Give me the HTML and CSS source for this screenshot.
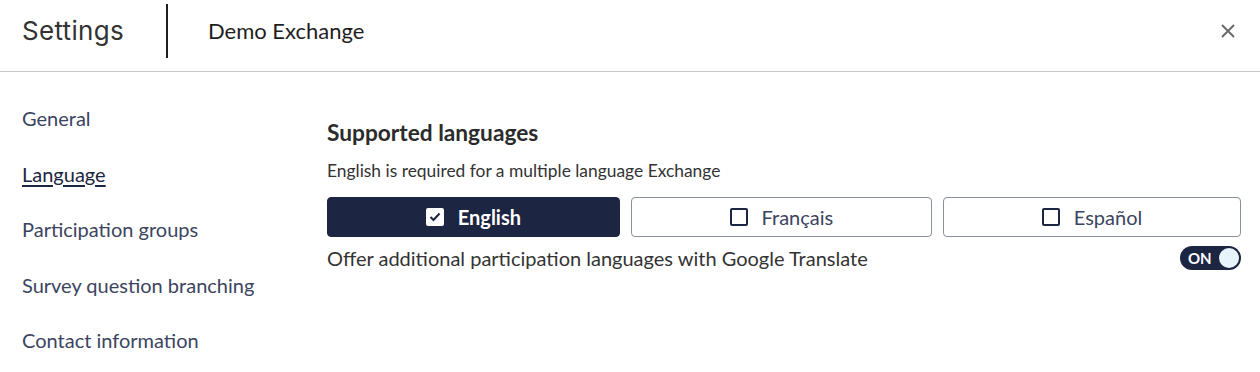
FILE: index.html
```html
<!DOCTYPE html>
<html lang="en">
<head>
<meta charset="utf-8">
<title>Settings</title>
<link rel="stylesheet" href="styles.css">
</head>
<body>
<header class="header">
  <h1 class="title">Settings</h1>
  <div class="divider"></div>
  <div class="exchange">Demo Exchange</div>
  <button class="close" aria-label="Close">
    <svg width="14" height="14" viewBox="0 0 14 14"><path d="M1 1L13 13M13 1L1 13" stroke="#6b6b6b" stroke-width="2" fill="none"/></svg>
  </button>
</header>
<div class="body">
  <nav class="sidebar">
    <a class="nav-item">General</a>
    <a class="nav-item active">Language</a>
    <a class="nav-item">Participation groups</a>
    <a class="nav-item">Survey question branching</a>
    <a class="nav-item">Contact information</a>
  </nav>
  <main class="content">
    <h2 class="section-title">Supported languages</h2>
    <p class="hint">English is required for a multiple language Exchange</p>
    <div class="langs">
      <button class="lang selected">
        <span class="box checked"><svg width="12" height="10" viewBox="0 0 12 10"><path d="M1.5 5L4.5 8L10.5 1.5" stroke="#1c2541" stroke-width="2" fill="none"/></svg></span>
        English
      </button>
      <button class="lang"><span class="box"></span>Français</button>
      <button class="lang"><span class="box"></span>Español</button>
    </div>
    <div class="translate-row">
      <span class="translate-label">Offer additional participation languages with Google Translate</span>
      <span class="toggle"><span class="toggle-text">ON</span><span class="knob"></span></span>
    </div>
  </main>
</div>
</body>
</html>
```
FILE: styles.css
```css
* { box-sizing: border-box; }
body {
  margin: 0;
  background: #fff;
  font-family: Lato, "Noto Sans", sans-serif;
  color: #2b2f3a;
}
.header {
  display: flex;
  align-items: center;
  height: 72px;
  border-bottom: 1px solid #c8c8c8;
  padding: 0 22px 10px 22px;
}
.title {
  margin: 0;
  font-family: Inter, "Open Sans", sans-serif;
  font-weight: 400;
  font-size: 26px;
  color: #333;
  letter-spacing: 0.3px;
}
.divider {
  width: 2px;
  height: 54px;
  background: #1e1e1e;
  margin: 4px 40px 0 42px;
  align-self: flex-start;
}
.exchange {
  font-size: 22px;
  color: #1e1e1e;
  flex: 1;
}
.close {
  border: 0;
  background: none;
  padding: 0;
  margin-right: 3px;
  display: flex;
  cursor: pointer;
}
.body {
  display: flex;
}
.sidebar {
  width: 327px;
  padding: 34px 0 0 22px;
  display: flex;
  flex-direction: column;
  gap: 31.5px;
}
.nav-item {
  font-size: 20px;
  line-height: 24px;
  color: #3b4460;
  white-space: nowrap;
}
.nav-item.active {
  color: #1c2541;
  text-decoration: underline;
  text-underline-offset: 3px;
  text-decoration-thickness: 2px;
}
.content {
  flex: 1;
  padding: 48px 19px 0 0;
}
.section-title {
  margin: 0;
  font-size: 22.7px;
  font-weight: 700;
  color: #2b2b2b;
  line-height: 26px;
}
.hint {
  margin: 14px 0 0;
  font-size: 17.4px;
  line-height: 21px;
  color: #333;
}
.langs {
  display: flex;
  gap: 11px;
  margin-top: 16px;
}
.lang {
  flex: 1 1 auto;
  height: 40px;
  display: flex;
  align-items: center;
  justify-content: center;
  gap: 14px;
  border: 1px solid #8a8f9c;
  border-radius: 4px;
  background: #fff;
  font-family: Lato, sans-serif;
  font-size: 20px;
  color: #3b4460;
  cursor: pointer;
}
.lang.selected {
  background: #1c2541;
  border-color: #1c2541;
  color: #fff;
  font-weight: 700;
}
.box {
  width: 18px;
  height: 18px;
  border: 2px solid #1c2541;
  border-radius: 2px;
  display: flex;
  align-items: center;
  justify-content: center;
}
.box.checked {
  background: #fff;
  border-color: #fff;
}
.translate-row {
  display: flex;
  align-items: center;
  justify-content: space-between;
  margin-top: 9px;
}
.translate-label {
  font-size: 20px;
  line-height: 24px;
  color: #333;
}
.toggle {
  width: 61px;
  height: 24px;
  border-radius: 12px;
  background: #1c2541;
  display: flex;
  align-items: center;
  justify-content: space-between;
  padding: 0 2px 0 8px;
}
.toggle-text {
  color: #fff;
  font-weight: 700;
  font-size: 15px;
}
.knob {
  width: 20px;
  height: 20px;
  border-radius: 50%;
  background: #e8f4fc;
}
```
